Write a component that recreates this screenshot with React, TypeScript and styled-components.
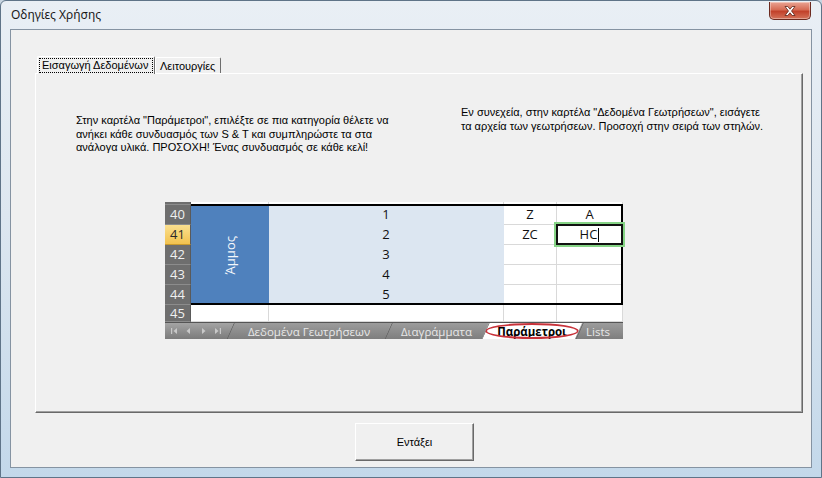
import React from 'react';
import styled, { createGlobalStyle } from 'styled-components';

const GlobalStyle = createGlobalStyle`
  html, body {
    margin: 0;
    padding: 0;
    background: #c8d5e1;
  }
  body {
    width: 822px;
    height: 478px;
    overflow: hidden;
  }
`;

const Frame = styled.div`
  width: 822px;
  height: 478px;
  box-sizing: border-box;
  display: flex;
  flex-direction: column;
  background: linear-gradient(180deg, #e9eff5 0%, #dde7f0 45%, #c3d8ea 100%);
  border: 1px solid #5f7488;
  border-radius: 6px 6px 0 0;
  font-family: "Liberation Sans", Arial, sans-serif;
`;

const TitleBar = styled.div`
  height: 28px;
  display: flex;
  align-items: flex-start;
  justify-content: space-between;
  padding-left: 10px;
`;

const Title = styled.span`
  font-family: "Noto Sans", "DejaVu Sans", sans-serif;
  font-size: 12px;
  line-height: 28px;
  color: #1a1a1a;
`;

const CloseButton = styled.div`
  width: 42px;
  height: 18px;
  margin: 1px 10px 0 0;
  border: 1px solid #6b2a1f;
  border-top: none;
  border-radius: 0 0 5px 5px;
  box-sizing: border-box;
  background: linear-gradient(180deg, #eaa493 0%, #d66c55 45%, #c2412a 55%, #d4735a 100%);
  box-shadow: inset 0 0 0 1px rgba(255, 255, 255, 0.35);
  display: flex;
  align-items: center;
  justify-content: center;
`;

const Client = styled.div`
  flex: 1;
  margin: 0 9px 9px 9px;
  border: 1px solid #8593a2;
  background: #f0f0f0;
  display: flex;
  flex-direction: column;
  font-size: 11px;
  color: #000;
`;

const TabRow = styled.div`
  display: flex;
  align-items: flex-end;
  height: 17px;
  margin: 26px 0 0 26px;
`;

const Tab = styled.div<{ $active?: boolean }>`
  position: relative;
  z-index: ${p => (p.$active ? 1 : 0)};
  box-sizing: border-box;
  width: ${p => (p.$active ? 118 : 66)}px;
  height: ${p => (p.$active ? 18 : 16)}px;
  margin-bottom: ${p => (p.$active ? -1 : 0)}px;
  padding: ${p => (p.$active ? '1px 1px 0' : '1px 2px 0')};
  background: #f0f0f0;
  border: 1px solid #fff;
  border-bottom: none;
  border-right: 1px solid #6e6e6e;
  border-radius: 2px 2px 0 0;
  font-size: 11px;
  line-height: 13px;
`;

const FocusLabel = styled.span`
  display: block;
  border: 1px dotted #000;
  padding: 0 2px;
  white-space: nowrap;
`;

const PlainLabel = styled.span`
  display: block;
  padding: 1px 2px 0;
  white-space: nowrap;
`;

const Panel = styled.div`
  width: 768px;
  height: 340px;
  box-sizing: border-box;
  margin-left: 24px;
  border-top: 1px solid #fff;
  border-left: 1px solid #fff;
  border-right: 1px solid #696969;
  border-bottom: 1px solid #696969;
  box-shadow: inset -1px -1px 0 #a0a0a0;
  display: flex;
  flex-direction: column;
`;

const TextRow = styled.div`
  height: 128px;
  box-sizing: border-box;
  display: flex;
  padding: 32px 0 0 40px;
`;

const Para = styled.p<{ $width: number; $top: number }>`
  margin: ${p => p.$top}px 0 0 0;
  width: ${p => p.$width}px;
  font-size: 11px;
  line-height: 13.5px;
  white-space: nowrap;
`;

const Sheet = styled.div`
  width: 458px;
  margin-left: 129px;
  display: flex;
  flex-direction: column;
  font-family: "Open Sans", "Liberation Sans", sans-serif;
  font-size: 13px;
  background: #fff;
`;

const Grid = styled.div`
  display: grid;
  grid-template-columns: 26px 78px 235px 53px 66px;
  grid-template-rows: 3px repeat(5, 20px) 17px;
`;

const RowHead = styled.div<{ $active?: boolean; $row: number }>`
  grid-column: 1;
  grid-row: ${p => p.$row};
  box-sizing: border-box;
  display: flex;
  align-items: center;
  justify-content: center;
  color: ${p => (p.$active ? '#2a2a2a' : '#f0f0f0')};
  background: ${p => (p.$active ? 'linear-gradient(180deg, #fbe08f, #f2c24f)' : '#6e6e6e')};
  border-bottom: 1px solid ${p => (p.$active ? '#c99a2e' : '#8c8c8c')};
  border-right: 1px solid #5a5a5a;
  font-size: 13px;
  line-height: 1;
`;

const Cell = styled.div<{ $col: number; $row: number; $shade?: boolean }>`
  grid-column: ${p => p.$col};
  grid-row: ${p => p.$row};
  box-sizing: border-box;
  display: flex;
  align-items: center;
  justify-content: center;
  background: ${p => (p.$shade ? '#dce6f1' : '#fff')};
  border-right: 1px solid ${p => (p.$shade ? '#dce6f1' : '#d9d9d9')};
  border-bottom: 1px solid ${p => (p.$shade ? '#dce6f1' : '#d9d9d9')};
  color: #111;
  line-height: 1;
`;

const SandCell = styled.div`
  grid-column: 2;
  grid-row: 2 / 7;
  background: #4f81bd;
  display: flex;
  align-items: center;
  justify-content: center;
`;

const VerticalText = styled.span`
  writing-mode: vertical-rl;
  transform: rotate(180deg);
  color: #f4f7fb;
  font-size: 13px;
`;

const RangeBorder = styled.div`
  grid-column: 2 / 6;
  grid-row: 2 / 7;
  border-top: 2px solid #000;
  border-bottom: 2px solid #000;
  border-right: 2px solid #000;
  margin-top: -1px;
  pointer-events: none;
`;

const Selected = styled.div`
  grid-column: 5;
  grid-row: 3;
  margin: -1px 0 0 -1px;
  box-sizing: border-box;
  border: 2px solid #111;
  box-shadow: 0 0 0 2px #86d486;
  display: flex;
  align-items: center;
  justify-content: center;
  color: #111;
  line-height: 1;
`;

const Caret = styled.span`
  display: inline-block;
  width: 1px;
  height: 14px;
  margin-left: 1px;
  background: #000;
`;

const SheetTabs = styled.div`
  height: 16px;
  display: flex;
  background: linear-gradient(180deg, #a4a4a4, #7b7b7b);
  border-top: 1px solid #555;
  overflow: hidden;
`;

const NavArrows = styled.div`
  flex: 0 0 68px;
  display: flex;
  align-items: center;
  justify-content: space-around;
  padding: 0 8px 0 2px;
  box-sizing: border-box;
`;

const SheetTab = styled.div<{ $width: number; $active?: boolean; $start?: boolean }>`
  position: relative;
  flex: 0 0 ${p => p.$width}px;
  margin-left: -6px;
  display: flex;
  align-items: center;
  justify-content: ${p => (p.$start ? 'flex-start' : 'center')};
  padding-left: ${p => (p.$start ? 10 : 0)}px;
  box-sizing: border-box;
  clip-path: polygon(7px 0, 100% 0, calc(100% - 7px) 100%, 0 100%);
  background: ${p => (p.$active ? '#fff' : 'linear-gradient(180deg, #9c9c9c, #7e7e7e)')};
  color: ${p => (p.$active ? '#000' : '#e8e8e8')};
  font-weight: ${p => (p.$active ? 700 : 400)};
  font-size: 11.5px;
  z-index: ${p => (p.$active ? 2 : 1)};
  &::before {
    content: "";
    position: absolute;
    left: 3px;
    top: 0;
    bottom: 0;
    width: 1px;
    background: #505050;
    transform: skewX(-24deg);
  }
`;

const RedRing = styled.span`
  position: absolute;
  left: 3px;
  right: 3px;
  top: 0;
  bottom: 0;
  border: 2px solid #c8323a;
  border-radius: 50%;
  pointer-events: none;
`;

const ButtonRow = styled.div`
  display: flex;
  margin: 10px 0 0 344px;
`;

const OkButton = styled.button`
  width: 119px;
  height: 38px;
  background: #f0f0f0;
  border: 1px solid #fff;
  border-right-color: #696969;
  border-bottom-color: #696969;
  box-shadow: inset -1px -1px 0 #a0a0a0;
  font-family: "Liberation Sans", Arial, sans-serif;
  font-size: 11px;
  color: #000;
  padding: 0;
`;

const Arrow = ({ dir, bar }: { dir: 'l' | 'r'; bar?: boolean }) => (
  <svg width="7" height="8" viewBox="0 0 7 8">
    {dir === 'l' ? (
      <>
        {bar && <rect x="0" y="1" width="1.2" height="6" fill="#c9c9c9" />}
        <path d={bar ? 'M6 1 L2.5 4 L6 7 Z' : 'M5 1 L1.5 4 L5 7 Z'} fill="#c9c9c9" />
      </>
    ) : (
      <>
        <path d={bar ? 'M1 1 L4.5 4 L1 7 Z' : 'M2 1 L5.5 4 L2 7 Z'} fill="#c9c9c9" />
        {bar && <rect x="5.8" y="1" width="1.2" height="6" fill="#c9c9c9" />}
      </>
    )}
  </svg>
);

const rows = [
  { n: '40', num: '1', z: 'Z' },
  { n: '41', num: '2', z: 'ZC' },
  { n: '42', num: '3', z: '' },
  { n: '43', num: '4', z: '' },
  { n: '44', num: '5', z: '' },
];

export default function App() {
  return (
    <>
      <GlobalStyle />
      <Frame>
        <TitleBar>
          <Title>Οδηγίες Χρήσης</Title>
          <CloseButton>
            <svg width="14" height="12" viewBox="0 0 14 12">
              <path
                d="M2 1.5 L4.8 1.5 L7 4.2 L9.2 1.5 L12 1.5 L8.5 6 L12 10.5 L9.2 10.5 L7 7.8 L4.8 10.5 L2 10.5 L5.5 6 Z"
                fill="#fff"
                stroke="#5a2318"
                strokeWidth="0.8"
              />
            </svg>
          </CloseButton>
        </TitleBar>
        <Client>
          <TabRow>
            <Tab $active>
              <FocusLabel>Εισαγωγή Δεδομένων</FocusLabel>
            </Tab>
            <Tab>
              <PlainLabel>Λειτουργίες</PlainLabel>
            </Tab>
          </TabRow>
          <Panel>
            <TextRow>
              <Para $width={385} $top={8}>
                Στην καρτέλα "Παράμετροι", επιλέξτε σε πια κατηγορία θέλετε να
                <br />
                ανήκει κάθε συνδυασμός των S &amp; T και συμπληρώστε τα στα
                <br />
                ανάλογα υλικά. ΠΡΟΣΟΧΗ! Ένας συνδυασμός σε κάθε κελί!
              </Para>
              <Para $width={320} $top={0}>
                Εν συνεχεία, στην καρτέλα "Δεδομένα Γεωτρήσεων", εισάγετε
                <br />
                τα αρχεία των γεωτρήσεων. Προσοχή στην σειρά των στηλών.
              </Para>
            </TextRow>
            <Sheet>
              <Grid>
                <RowHead $row={1} />
                {[2, 3, 4, 5].map(c => (
                  <Cell key={`t${c}`} $col={c} $row={1} />
                ))}
                {rows.map((r, i) => (
                  <React.Fragment key={r.n}>
                    <RowHead $row={i + 2} $active={r.n === '41'}>
                      {r.n}
                    </RowHead>
                    <Cell $col={3} $row={i + 2} $shade>
                      {r.num}
                    </Cell>
                    <Cell $col={4} $row={i + 2}>
                      {r.z}
                    </Cell>
                    {r.n !== '41' && (
                      <Cell $col={5} $row={i + 2}>
                        {r.n === '40' ? 'A' : ''}
                      </Cell>
                    )}
                  </React.Fragment>
                ))}
                <SandCell>
                  <VerticalText>Άμμος</VerticalText>
                </SandCell>
                <RowHead $row={7}>45</RowHead>
                {[2, 3, 4, 5].map(c => (
                  <Cell key={`b${c}`} $col={c} $row={7} />
                ))}
                <RangeBorder />
                <Selected>
                  HC
                  <Caret />
                </Selected>
              </Grid>
              <SheetTabs>
                <NavArrows>
                  <Arrow dir="l" bar />
                  <Arrow dir="l" />
                  <Arrow dir="r" />
                  <Arrow dir="r" bar />
                </NavArrows>
                <SheetTab $width={164}>Δεδομένα Γεωτρήσεων</SheetTab>
                <SheetTab $width={103}>Διαγράμματα</SheetTab>
                <SheetTab $width={100} $active>
                  Παράμετροι
                  <RedRing />
                </SheetTab>
                <SheetTab $width={60} $start>
                  Lists
                </SheetTab>
              </SheetTabs>
            </Sheet>
          </Panel>
          <ButtonRow>
            <OkButton>Εντάξει</OkButton>
          </ButtonRow>
        </Client>
      </Frame>
    </>
  );
}
